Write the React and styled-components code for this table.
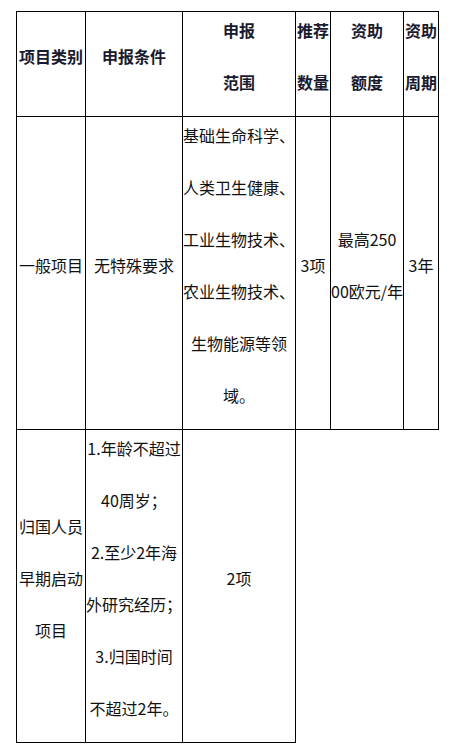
import React from "react";
import styled, { createGlobalStyle } from "styled-components";

const GlobalStyle = createGlobalStyle`
  html, body {
    margin: 0;
    padding: 0;
    background: #ffffff;
  }
  body {
    font-family: "Noto Sans CJK SC", "Liberation Sans", sans-serif;
    color: #000;
  }
`;

const Page = styled.div`
  padding: 11px 0 0 16px;
`;

const Table = styled.table`
  border-collapse: collapse;
  table-layout: fixed;
  width: 423px;
`;

const Cell = styled.td`
  border: 1px solid #000;
  padding: 0;
  text-align: center;
  vertical-align: middle;
  font-size: 16px;
  line-height: 52px;
  font-weight: ${(p) => (p.$head ? 700 : 400)};
  color: ${(p) => (p.$head ? "#1a1a2e" : "#111")};
  white-space: nowrap;
`;

const Lines = styled.div`
  margin: -8px 0 8px;
`;

const Line = styled.div`
  height: 52px;
`;

const widths = [69, 97, 113, 35, 73, 35];

const header = [
  ["项目类别"],
  ["申报条件"],
  ["申报", "范围"],
  ["推荐", "数量"],
  ["资助", "额度"],
  ["资助", "周期"],
];

const rows = [
  [
    ["一般项目"],
    ["无特殊要求"],
    [
      "基础生命科学、",
      "人类卫生健康、",
      "工业生物技术、",
      "农业生物技术、",
      "生物能源等领",
      "域。",
    ],
    ["3项"],
    ["最高250", "00欧元/年"],
    ["3年"],
  ],
  [
    ["归国人员", "早期启动", "项目"],
    [
      "1.年龄不超过",
      "40周岁；",
      "2.至少2年海",
      "外研究经历；",
      "3.归国时间",
      "不超过2年。",
    ],
    ["2项"],
  ],
];

function Content({ lines }) {
  return (
    <Lines>
      {lines.map((l, i) => (
        <Line key={i}>{l}</Line>
      ))}
    </Lines>
  );
}

export default function App() {
  return (
    <>
      <GlobalStyle />
      <Page>
        <Table>
          <colgroup>
            {widths.map((w, i) => (
              <col key={i} style={{ width: w }} />
            ))}
          </colgroup>
          <thead>
            <tr>
              {header.map((h, i) => (
                <Cell as="th" $head key={i}>
                  <Content lines={h} />
                </Cell>
              ))}
            </tr>
          </thead>
          <tbody>
            {rows.map((r, ri) => (
              <tr key={ri}>
                {r.map((c, ci) => (
                  <Cell key={ci}>
                    <Content lines={c} />
                  </Cell>
                ))}
              </tr>
            ))}
          </tbody>
        </Table>
      </Page>
    </>
  );
}
